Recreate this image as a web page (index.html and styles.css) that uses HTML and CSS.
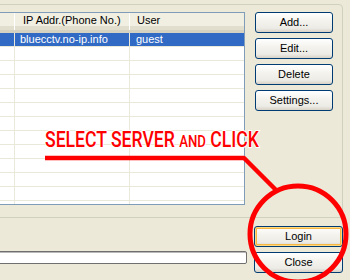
FILE: index.html
```html
<!DOCTYPE html>
<html>
<head>
<meta charset="utf-8">
<link rel="stylesheet" href="styles.css">
</head>
<body>
<div class="group">
  <div class="list">
    <div class="lhead">
      <span class="hc"></span><span class="hc hc1">IP Addr.(Phone No.)</span><span class="hc hc2">User</span>
    </div>
    <div class="row sel"><span class="c"></span><span class="c c1">bluecctv.no-ip.info</span><span class="c c2">guest</span></div>
    <div class="row"><span class="c"></span><span class="c"></span><span class="c"></span></div>
    <div class="row"><span class="c"></span><span class="c"></span><span class="c"></span></div>
    <div class="row"><span class="c"></span><span class="c"></span><span class="c"></span></div>
    <div class="row"><span class="c"></span><span class="c"></span><span class="c"></span></div>
    <div class="row"><span class="c"></span><span class="c"></span><span class="c"></span></div>
    <div class="row"><span class="c"></span><span class="c"></span><span class="c"></span></div>
    <div class="row"><span class="c"></span><span class="c"></span><span class="c"></span></div>
    <div class="row"><span class="c"></span><span class="c"></span><span class="c"></span></div>
    <div class="row"><span class="c"></span><span class="c"></span><span class="c"></span></div>
    <div class="row"><span class="c"></span><span class="c"></span><span class="c"></span></div>
    <div class="row"><span class="c"></span><span class="c"></span><span class="c"></span></div>
    <div class="row"><span class="c"></span><span class="c"></span><span class="c"></span></div>
  </div>
  <div class="btns">
    <button class="btn">Add...</button>
    <button class="btn">Edit...</button>
    <button class="btn">Delete</button>
    <button class="btn">Settings...</button>
  </div>
</div>
<div class="bottom">
  <div class="field"></div>
  <div class="btns2">
    <button class="btn wide default">Login</button>
    <button class="btn wide">Close</button>
  </div>
</div>
<svg class="annot" width="350" height="280" viewBox="0 0 350 280">
  <text class="redtext" transform="translate(45 147) scale(0.80 1)" x="0" y="0">SELECT SERVER <tspan class="small">AND</tspan> CLICK</text>
  <polyline points="45,158 244,158 277,191" fill="none" stroke="#ff0000" stroke-width="4.5" stroke-linejoin="round"/>
  <ellipse cx="298" cy="234" rx="48" ry="48" fill="none" stroke="#ff0000" stroke-width="5"/>
</svg>
</body>
</html>
```

FILE: styles.css
```css
* { box-sizing: border-box; }
html, body { margin: 0; padding: 0; }
body {
  width: 350px;
  height: 280px;
  overflow: hidden;
  background: #ECE9D8;
  font-family: "Liberation Sans", Arial, sans-serif;
  font-size: 11px;
  color: #000;
  position: relative;
}
.group {
  margin: 4px 0 0 -20px;
  width: 363px;
  height: 214px;
  border: 1px solid #D0D0BF;
  border-radius: 4px;
  padding: 7px 9px 0 9px;
  display: flex;
  gap: 10px;
}
.list {
  width: 255px;
  height: 193px;
  border: 1px solid #7F9DB9;
  background: #fff;
  overflow: hidden;
}
.lhead {
  height: 20px;
  display: grid;
  grid-template-columns: 24px 115px 1fr;
  background: #F1EFE2;
  border-bottom: 3px solid #D6D2C2;
  box-shadow: inset 0 -4px 0 #E2DECD;
}
.hc {
  line-height: 15px;
  background: linear-gradient(#C7C5B2, #C7C5B2) no-repeat right 0 top 3px / 1px 12px;
  box-shadow: inset -2px 0 0 -1px #fff;
}
.hc1 { padding-left: 8px; }
.hc2 { padding-left: 7px; background: none; box-shadow: none; }
.row {
  height: 14px;
  display: grid;
  grid-template-columns: 24px 115px 1fr;
}
.c {
  border-right: 1px solid #EAE8D8;
  border-bottom: 1px solid #EAE8D8;
  line-height: 13px;
  white-space: nowrap;
}
.c:last-child { border-right: 0; }
.c1 { padding-left: 5px; }
.c2 { padding-left: 6px; }
.sel .c { background: #316AC5; color: #fff; }
.btns, .btns2 {
  display: flex;
  flex-direction: column;
  gap: 5px;
}
.btn {
  width: 78px;
  height: 21px;
  padding: 0;
  border: 1px solid #003C74;
  border-radius: 3px;
  background: linear-gradient(#FFFFFF 0%, #F4F3EE 40%, #ECEBE6 80%, #D8D2C6 100%);
  font-family: "Liberation Sans", Arial, sans-serif;
  font-size: 11px;
  color: #000;
  line-height: 19px;
  text-align: center;
}
.btn.wide { width: 89px; }
.btn.default {
  box-shadow: inset 0 0 0 1px #FFD97F, inset 0 0 0 2px #F6B745;
}
.bottom {
  margin: 8px 0 0 -20px;
  width: 370px;
  padding-right: 7px;
  display: flex;
  align-items: flex-end;
  gap: 7px;
}
.field {
  flex: 1;
  height: 13px;
  margin-bottom: 9px;
  background: #fff;
  border: 1px solid #6F6F6F;
  border-radius: 2px;
  box-shadow: inset 0 1px 0 #B9B9B9;
}
.annot {
  position: absolute;
  left: 0;
  top: 0;
  pointer-events: none;
}
.redtext {
  fill: #ff0000;
  stroke: #ffffff;
  stroke-width: 2px;
  paint-order: stroke;
  font-family: Roboto, "Liberation Sans", Arial, sans-serif;
  font-weight: 500;
  font-size: 22px;
}
.redtext .small { font-size: 16.5px; }
```
